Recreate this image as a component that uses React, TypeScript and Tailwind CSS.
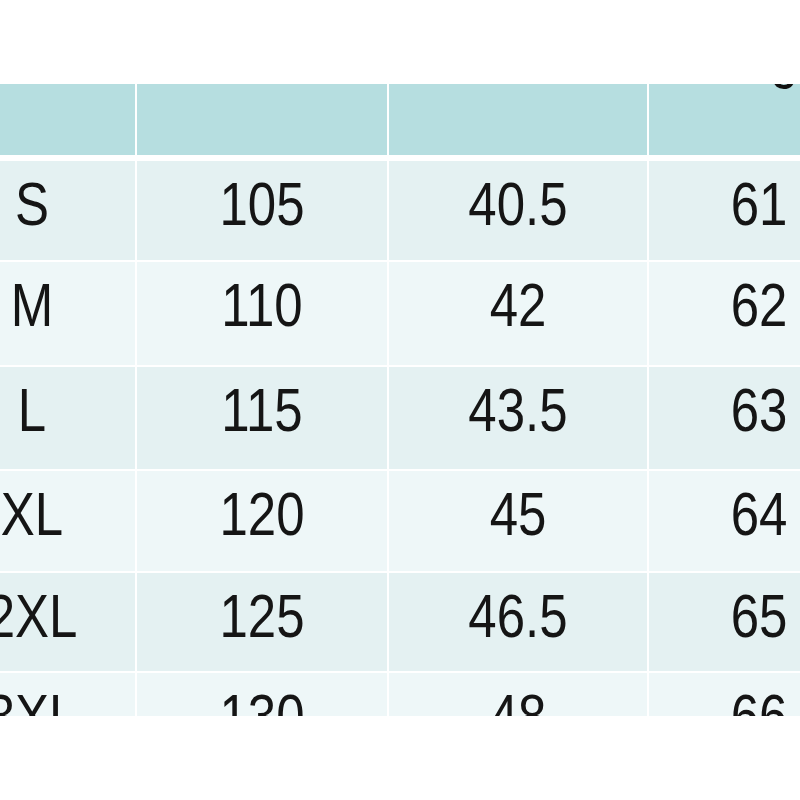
import React from "react";

const rows: { h: string; bg: string; cells: string[] }[] = [
  { h: "h-[99px]", bg: "bg-[#e4f1f2]", cells: ["S", "105", "40.5", "61"] },
  { h: "h-[103px]", bg: "bg-[#eef7f8]", cells: ["M", "110", "42", "62"] },
  { h: "h-[102px]", bg: "bg-[#e4f1f2]", cells: ["L", "115", "43.5", "63"] },
  { h: "h-[100px]", bg: "bg-[#eef7f8]", cells: ["XL", "120", "45", "64"] },
  { h: "h-[98px]", bg: "bg-[#e4f1f2]", cells: ["2XL", "125", "46.5", "65"] },
  { h: "h-[43px]", bg: "bg-[#eef7f8]", cells: ["3XL", "130", "48", "66"] },
];

const widths = ["w-[206px]", "w-[250px]", "w-[258px]", "w-[220px]"];

export default function App() {
  return (
    <div
      className="w-[800px] h-[800px] bg-white overflow-hidden"
      style={{ fontFamily: '"Liberation Sans", Arial, sans-serif' }}
    >
      <div className="mt-[84px] ml-[-71px] w-[940px] flex flex-col bg-white">
        <div className="flex h-[71px] gap-[2px]">
          {widths.map((w, i) => (
            <div key={i} className={`${w} bg-[#b6dee0] relative overflow-hidden shrink-0`}>
              {i === 3 && (
                <span className="absolute left-[121px] top-[-55px] text-[51px] leading-none text-[#111] scale-y-[1.2]">
                  g
                </span>
              )}
            </div>
          ))}
        </div>
        <div className="h-[6px]" />
        {rows.map((r, ri) => (
          <React.Fragment key={ri}>
            <div className={`flex ${r.h} gap-[2px] overflow-hidden`}>
              {r.cells.map((c, ci) => (
                <div
                  key={ci}
                  className={`${widths[ci]} ${r.bg} shrink-0 flex justify-center pt-[18px] overflow-hidden`}
                >
                  <span className="text-[51px] leading-none text-[#151515] scale-y-[1.18] h-[51px]">
                    {c}
                  </span>
                </div>
              ))}
            </div>
            {ri < rows.length - 1 && <div className="h-[2px]" />}
          </React.Fragment>
        ))}
      </div>
    </div>
  );
}
